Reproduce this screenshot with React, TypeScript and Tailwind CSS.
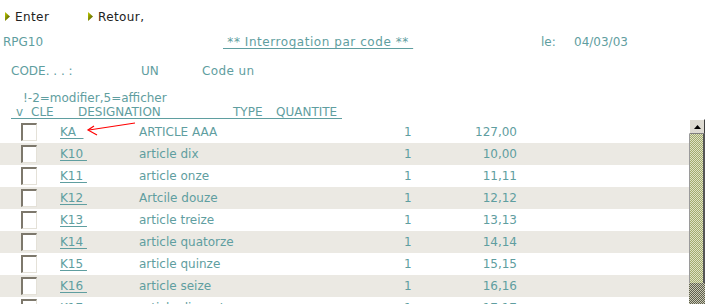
import React from "react";

type Row = { cle: string; designation: string; type: string; qty: string };

const rows: Row[] = [
  { cle: "KA  ", designation: "ARTICLE AAA", type: "1", qty: "127,00" },
  { cle: "K10 ", designation: "article dix", type: "1", qty: "10,00" },
  { cle: "K11 ", designation: "article onze", type: "1", qty: "11,11" },
  { cle: "K12 ", designation: "Artcile douze", type: "1", qty: "12,12" },
  { cle: "K13 ", designation: "article treize", type: "1", qty: "13,13" },
  { cle: "K14 ", designation: "article quatorze", type: "1", qty: "14,14" },
  { cle: "K15 ", designation: "article quinze", type: "1", qty: "15,15" },
  { cle: "K16 ", designation: "article seize", type: "1", qty: "16,16" },
  { cle: "K17 ", designation: "article dixsept", type: "1", qty: "17,17" },
];

function Bullet() {
  return (
    <svg width="6" height="10" viewBox="0 0 6 10" className="mr-[4px]">
      <defs>
        <linearGradient id="bl" x1="0" y1="0" x2="1" y2="1">
          <stop offset="0" stopColor="#c4d000" />
          <stop offset="1" stopColor="#3e4600" />
        </linearGradient>
      </defs>
      <polygon points="0,0 5,4.5 0,9" fill="url(#bl)" />
    </svg>
  );
}

function Checkbox() {
  return (
    <div className="w-[16px] h-[18px] bg-white border-t-2 border-l-2 border-t-[#7d786c] border-l-[#7d786c] border-b border-r border-b-[#e4e1d8] border-r-[#e4e1d8]" />
  );
}

function Scrollbar() {
  return (
    <div className="w-[16px] h-full flex flex-col">
      <div className="h-[15px] bg-[#dedbd2] border-t border-l border-t-white border-l-white border-b border-r border-b-[#808080] border-r-[#404040] flex items-center justify-center">
        <svg width="7" height="4" viewBox="0 0 7 4">
          <polygon points="3.5,0 7,4 0,4" fill="#000" />
        </svg>
      </div>
      <div className="h-[149px] border-l border-l-[#9a9a9a] border-r-2 border-r-[#555] bg-[image:repeating-conic-gradient(#a3ab6e_0%_25%,#dfe2c6_0%_50%)] bg-[length:2px_2px]" />
      <div className="flex-1 bg-[image:repeating-conic-gradient(#5e5e4e_0%_25%,#c9c9b4_0%_50%)] bg-[length:2px_2px]" />
    </div>
  );
}

export default function App() {
  return (
    <div className="relative w-[708px] h-[304px] overflow-hidden bg-white pt-[1px] text-[12px] text-[#5f9ea0] font-['DejaVu_Sans',Verdana,sans-serif]">
      {/* action bar */}
      <div className="h-[32px] flex items-center text-[#222]">
        <div className="w-[88px] pl-[5px] flex items-center">
          <Bullet />
          <span className="tracking-[0.4px]">Enter</span>
        </div>
        <div className="flex items-center">
          <Bullet />
          <span className="tracking-[0.4px]">Retour,</span>
        </div>
      </div>

      <div className="h-[18px] flex items-center">
        <span className="w-[223px] pl-[3px]">RPG10</span>
        <span className="w-[318px]">
          <span className="whitespace-pre underline underline-offset-2 tracking-[0.55px]">{" ** Interrogation par code ** "}</span>
        </span>
        <span className="w-[33px]">le:</span>
        <span>04/03/03</span>
      </div>

      <div className="mt-[11px] h-[18px] flex items-center">
        <span className="w-[141px] pl-[11px]">CODE. . . :</span>
        <span className="w-[61px]">UN</span>
        <span className="tracking-[0.4px]">Code un</span>
      </div>

      <div className="mt-[11px] h-[14px] leading-[14px] pl-[23px]">!-2=modifier,5=afficher</div>

      <div className="ml-[11px] w-[331px] h-[14px] leading-[14px] border-b border-[#5f9ea0] flex pl-[5px]">
        <span className="w-[15px]">v</span>
        <span className="w-[47px]">CLE</span>
        <span className="w-[155px]">DESIGNATION</span>
        <span className="w-[43px]">TYPE</span>
        <span>QUANTITE</span>
      </div>

      <div className="h-[186px] flex">
        <div className="w-[689px] pt-[2px]">
          {rows.map((r, i) => (
            <div key={r.cle} className={`h-[22px] flex items-center ${i % 2 === 1 ? "bg-[#ebe9e3]" : "bg-white"}`}>
              <div className="w-[60px] pl-[21px]">
                <Checkbox />
              </div>
              <div className="w-[79px]">
                <span className="whitespace-pre underline underline-offset-2">{r.cle}</span>
              </div>
              <div className="w-[265px]">{r.designation}</div>
              <div className="w-[20px]">{r.type}</div>
              <div className="w-[93px] text-right">{r.qty}</div>
            </div>
          ))}
        </div>
        <Scrollbar />
      </div>

      {/* red pointer drawn onto the screenshot */}
      <svg className="absolute left-0 top-0 pointer-events-none" width="708" height="304">
        <polyline points="135,123 89,130" fill="none" stroke="#f00" strokeWidth="1.2" />
        <polyline points="94,126 88,130 97,135" fill="none" stroke="#f00" strokeWidth="1.2" />
      </svg>
    </div>
  );
}
